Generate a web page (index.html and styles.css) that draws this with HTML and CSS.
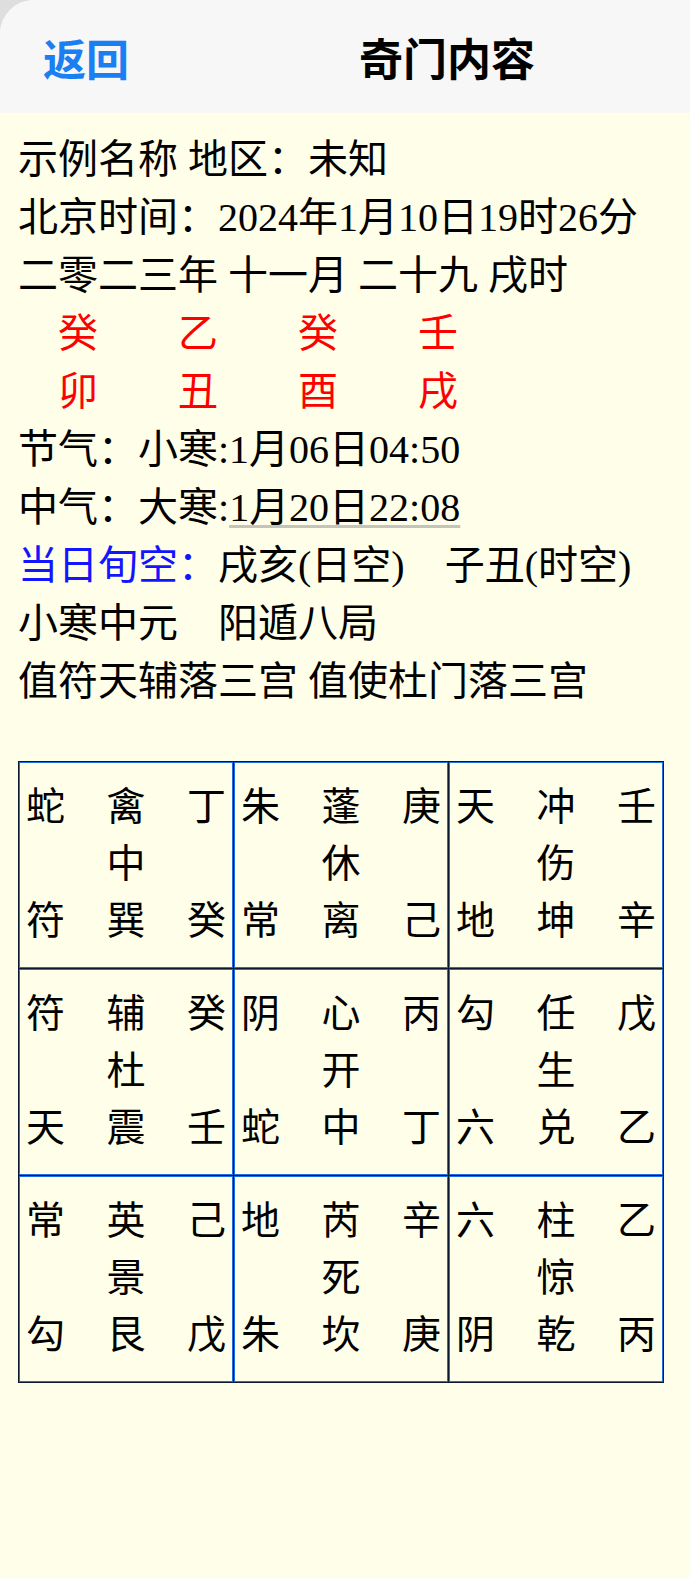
FILE: index.html
```html
<!DOCTYPE html>
<html lang="zh">
<head>
<meta charset="utf-8">
<link rel="stylesheet" href="styles.css">
</head>
<body>
<div class="page">
  <header class="nav">
    <span class="back">返回</span>
    <span class="title">奇门内容</span>
  </header>
  <main class="content">
    <div class="line">示例名称 地区：未知</div>
    <div class="line">北京时间：2024年1月10日19时26分</div>
    <div class="line">二零二三年 十一月 二十九 戌时</div>
    <div class="line red-row"><span>癸</span><span>乙</span><span>癸</span><span>壬</span></div>
    <div class="line red-row"><span>卯</span><span>丑</span><span>酉</span><span>戌</span></div>
    <div class="line">节气：小寒:1月06日04:50</div>
    <div class="line">中气：大寒:<span class="ul">1月20日22:08</span></div>
    <div class="line"><span class="blue">当日旬空：</span>戌亥(日空)<span class="gap"></span>子丑(时空)</div>
    <div class="line">小寒中元<span class="gap"></span>阳遁八局</div>
    <div class="line">值符天辅落三宫 值使杜门落三宫</div>

    <div class="board">
      <div class="cell"><span>蛇</span><span>禽</span><span>丁</span><span></span><span>中</span><span></span><span>符</span><span>巽</span><span>癸</span></div>
      <div class="cell"><span>朱</span><span>蓬</span><span>庚</span><span></span><span>休</span><span></span><span>常</span><span>离</span><span>己</span></div>
      <div class="cell"><span>天</span><span>冲</span><span>壬</span><span></span><span>伤</span><span></span><span>地</span><span>坤</span><span>辛</span></div>
      <div class="cell"><span>符</span><span>辅</span><span>癸</span><span></span><span>杜</span><span></span><span>天</span><span>震</span><span>壬</span></div>
      <div class="cell"><span>阴</span><span>心</span><span>丙</span><span></span><span>开</span><span></span><span>蛇</span><span>中</span><span>丁</span></div>
      <div class="cell"><span>勾</span><span>任</span><span>戊</span><span></span><span>生</span><span></span><span>六</span><span>兑</span><span>乙</span></div>
      <div class="cell"><span>常</span><span>英</span><span>己</span><span></span><span>景</span><span></span><span>勾</span><span>艮</span><span>戊</span></div>
      <div class="cell"><span>地</span><span>芮</span><span>辛</span><span></span><span>死</span><span></span><span>朱</span><span>坎</span><span>庚</span></div>
      <div class="cell"><span>六</span><span>柱</span><span>乙</span><span></span><span>惊</span><span></span><span>阴</span><span>乾</span><span>丙</span></div>
    </div>
  </main>
</div>
</body>
</html>
```

FILE: styles.css
```css
html, body {
  margin: 0;
  padding: 0;
}
body {
  background: #dedede;
  font-family: "Liberation Serif", "Noto Sans CJK SC", serif;
  color: #000;
}
.page {
  width: 690px;
  min-height: 1578px;
  background: #fefee9;
  border-top-left-radius: 34px;
  overflow: hidden;
}
.nav {
  height: 113px;
  background: #f7f7f7;
  display: flex;
  align-items: center;
  padding-left: 43px;
  box-sizing: border-box;
  font-family: "Noto Sans CJK SC", sans-serif;
  font-weight: 700;
  font-size: 43px;
}
.back {
  color: #1a7ff2;
}
.title {
  margin-left: 230px;
  color: #000;
  font-size: 44px;
}
.content {
  padding: 18px 18px 0 18px;
  font-size: 40px;
  line-height: 58px;
}
.line {
  white-space: pre;
}
.red-row {
  display: flex;
  padding-left: 40px;
  color: #ff0000;
}
.red-row span {
  width: 120px;
}
.blue {
  color: #1414ff;
}
.gap {
  display: inline-block;
  width: 40px;
}
.ul {
  text-decoration: underline;
  text-decoration-color: #c4c4bc;
  text-decoration-thickness: 3px;
  text-underline-offset: 4px;
}
.board {
  margin-top: 50px;
  width: 646px;
  display: grid;
  grid-template-columns: repeat(3, 1fr);
  background: #0b1a33;
  gap: 1px;
  padding: 1px;
  box-sizing: border-box;
}
.cell {
  height: 206px;
  box-sizing: border-box;
  border: 1px solid #1f6ee0;
  background: #fefee9;
  display: grid;
  grid-template-columns: repeat(3, auto);
  justify-content: space-between;
  align-content: start;
  padding: 15px 6px 0 6px;
  font-family: "Liberation Serif", "Noto Sans CJK SC", sans-serif;
  font-size: 39px;
  line-height: 57px;
}
.cell span {
  min-width: 39px;
  height: 57px;
}
```
